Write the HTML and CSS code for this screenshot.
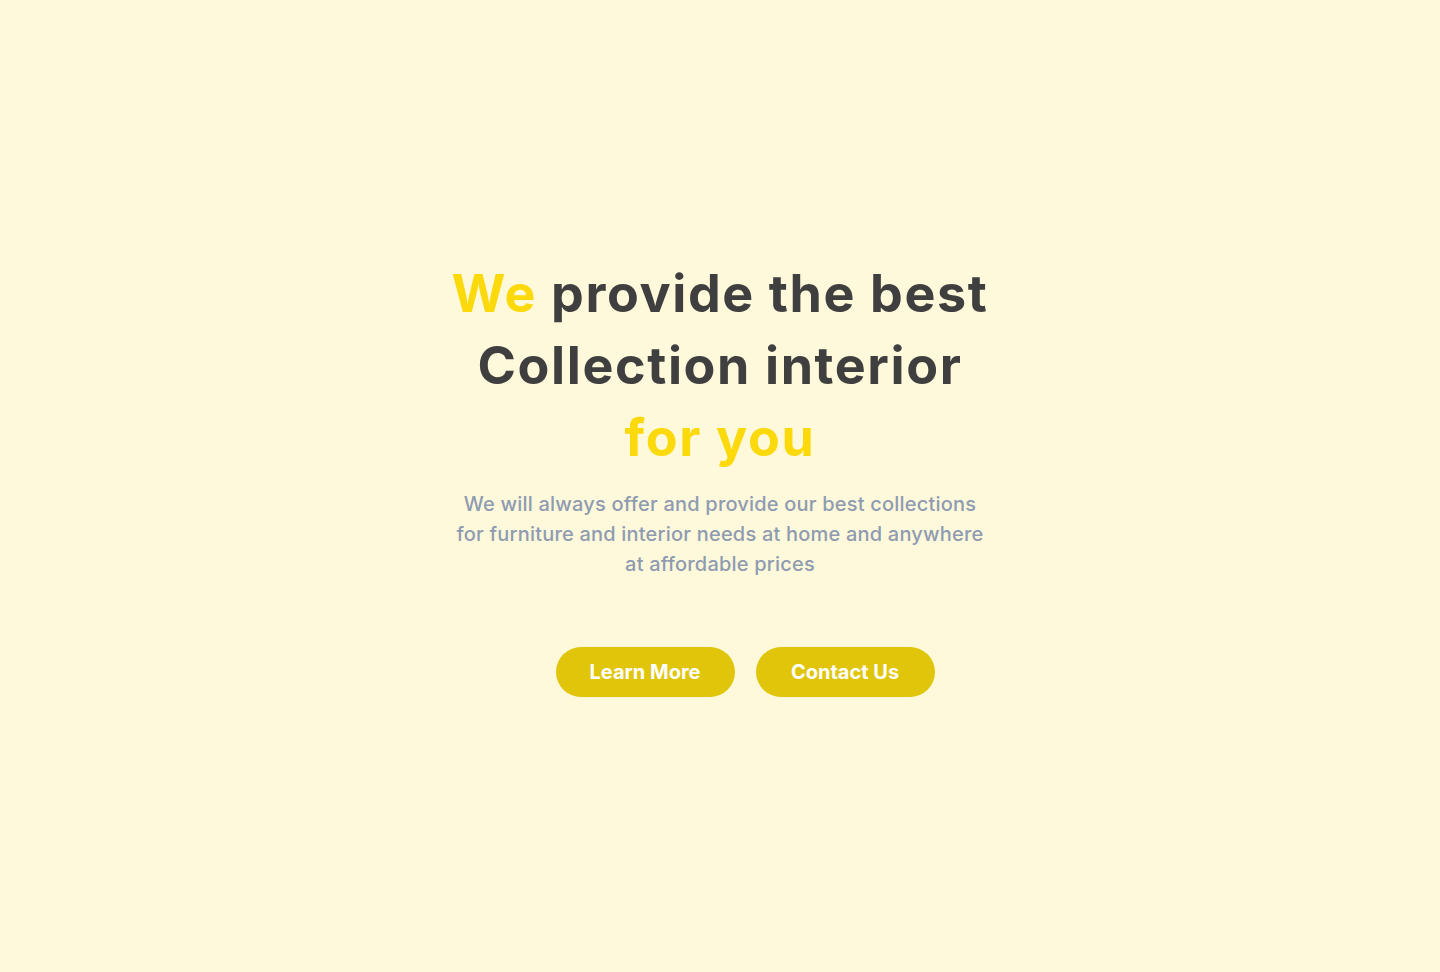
FILE: index.html
```html
<!DOCTYPE html>
<html lang="en">
<head>
<meta charset="utf-8">
<title>Interior</title>
<link rel="stylesheet" href="styles.css">
</head>
<body>
<main class="hero">
  <h1 class="hero-title">
    <span class="accent">We</span> provide the best<br>
    Collection interior<br>
    <span class="accent">for you</span>
  </h1>
  <p class="hero-text">We will always offer and provide our best collections for furniture and interior needs at home and anywhere at affordable prices</p>
  <div class="hero-actions">
    <a class="btn" href="#">Learn More</a>
    <a class="btn" href="#">Contact Us</a>
  </div>
</main>
</body>
</html>
```
FILE: styles.css
```css
* { box-sizing: border-box; }
html, body { margin: 0; padding: 0; }
body {
  background: #fef9db;
  font-family: Inter, "Noto Sans", sans-serif;
}
.hero {
  min-height: 972px;
  display: flex;
  flex-direction: column;
  align-items: center;
  justify-content: center;
  padding-bottom: 18px;
  text-align: center;
}
.hero-title {
  margin: 0;
  font-size: 52px;
  line-height: 72px;
  font-weight: 700;
  letter-spacing: 1.6px;
  color: #3f3f3f;
}
.accent { color: #fcd90a; }
.hero-text {
  margin: 15px 0 0;
  width: 540px;
  font-size: 20px;
  line-height: 30px;
  letter-spacing: 0.2px;
  color: #8f9bb0;
  font-weight: 500;
}
.hero-actions {
  margin-top: 68px;
  padding-left: 50px;
  display: flex;
  gap: 21px;
}
.btn {
  display: flex;
  align-items: center;
  justify-content: center;
  width: 179px;
  height: 50px;
  border-radius: 25px;
  background: #e0c50b;
  color: #fff;
  font-size: 20px;
  font-weight: 700;
  text-decoration: none;
}
```
